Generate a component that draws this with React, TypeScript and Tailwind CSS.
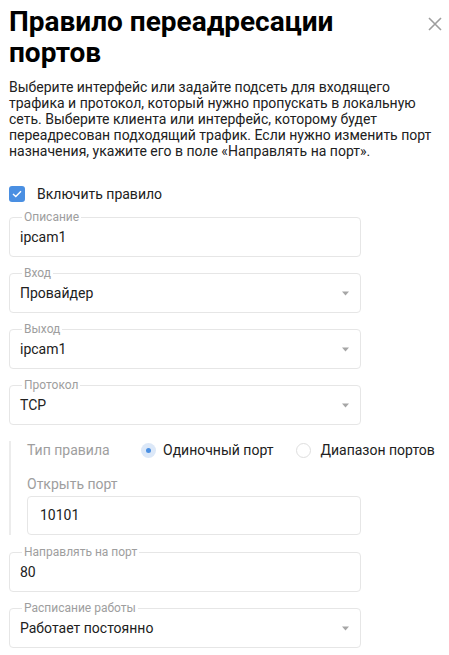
import React from 'react';

const font = { fontFamily: 'Roboto, "Noto Sans", sans-serif' };

function Arrow() {
	return (
		<svg width="7" height="5" viewBox="0 0 7 5" className="shrink-0 mr-[1px]">
			<path d="M0 0.5 H7 L3.5 4.5 Z" fill="#a6a6a6" />
		</svg>
	);
}

function Field({ label, value, select }: { label: string; value: string; select?: boolean }) {
	return (
		<div className="relative h-[40px] w-[352px] rounded-[4px] border border-[#e6e6e6] flex items-center pl-[10px] pr-[10px]">
			<span className="absolute -top-[9px] left-[12px] px-[2px] bg-white text-[12px] leading-[16px] text-[#9e9e9e]">
				{label}
			</span>
			<span className="flex-1 text-[14px] text-[#212121]">{value}</span>
			{select && <Arrow />}
		</div>
	);
}

export default function App() {
	return (
		<div className="bg-white min-h-[655px] w-[449px] pl-[9px] pt-[6px]" style={font}>
			<div className="flex items-start justify-between pr-[7px]">
				<h1 className="text-[28px] leading-[31px] font-bold text-black">
					Правило переадресации
					<br />
					портов
				</h1>
				<svg width="14" height="14" viewBox="0 0 14 14" className="mt-[11px] shrink-0">
					<path d="M1 1 L13 13 M13 1 L1 13" stroke="#9e9e9e" strokeWidth="1.6" />
				</svg>
			</div>

			<p className="mt-[11px] text-[14px] leading-[16px] text-[#212121] pr-[4px]">
				Выберите интерфейс или задайте подсеть для входящего трафика и протокол, который нужно пропускать в
				локальную сеть. Выберите клиента или интерфейс, которому будет переадресован подходящий трафик. Если
				нужно изменить порт назначения, укажите его в поле «Направлять на порт».
			</p>

			<label className="mt-[23px] flex items-center h-[24px]">
				<span className="w-[16px] h-[16px] rounded-[3px] bg-[#4a8fe2] flex items-center justify-center">
					<svg width="10" height="8" viewBox="0 0 10 8">
						<path d="M1 4 L3.8 6.6 L9 1.2" stroke="white" strokeWidth="1.4" fill="none" />
					</svg>
				</span>
				<span className="ml-[12px] text-[14px] text-[#212121]">Включить правило</span>
			</label>

			<div className="mt-[11px] flex flex-col gap-[16px]">
				<Field label="Описание" value="ipcam1" />
				<Field label="Вход" value="Провайдер" select />
				<Field label="Выход" value="ipcam1" select />
				<Field label="Протокол" value="TCP" select />
			</div>

			<div className="mt-[16px] border-l-2 border-[#ececec] pl-[16px]">
				<div className="flex items-center h-[18px] text-[14px] whitespace-nowrap">
					<span className="w-[114px] shrink-0 text-[#9e9e9e]">Тип правила</span>
					<span className="w-[15px] h-[15px] shrink-0 rounded-full bg-[#dce8f8] flex items-center justify-center">
						<span className="w-[5px] h-[5px] rounded-full bg-[#4a8fe2]" />
					</span>
					<span className="ml-[7px] text-[#212121]">Одиночный порт</span>
					<span className="ml-[23px] w-[15px] h-[15px] shrink-0 rounded-full border border-[#dedede]" />
					<span className="ml-[9px] text-[#212121]">Диапазон портов</span>
				</div>
				<div className="mt-[16px] h-[18px] leading-[18px] text-[14px] text-[#9e9e9e]">Открыть порт</div>
				<div className="mt-[3px] h-[39px] w-[334px] rounded-[4px] border border-[#e6e6e6] flex items-center pl-[12px] text-[14px] text-[#212121]">
					10101
				</div>
			</div>

			<div className="mt-[17px] flex flex-col gap-[16px]">
				<Field label="Направлять на порт" value="80" />
				<Field label="Расписание работы" value="Работает постоянно" select />
			</div>
		</div>
	);
}
